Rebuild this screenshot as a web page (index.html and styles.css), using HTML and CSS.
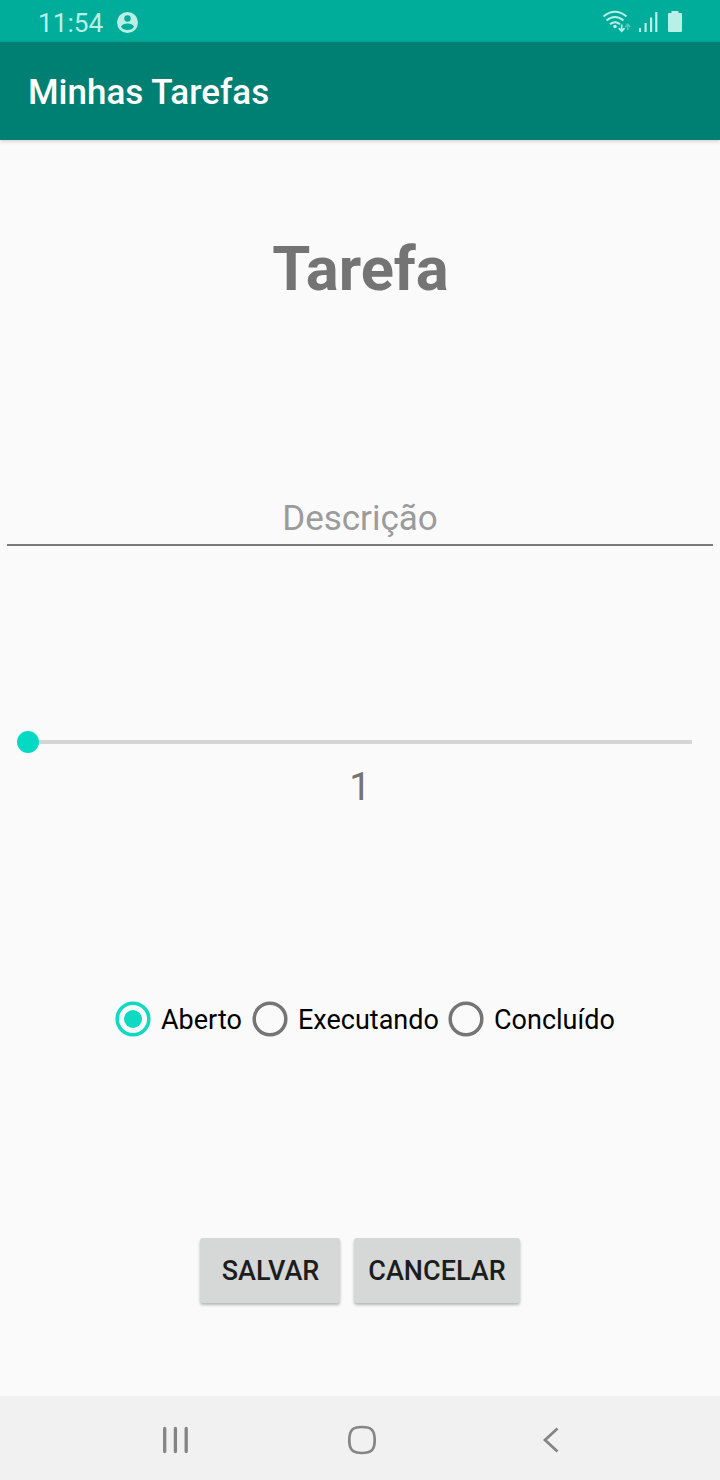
FILE: index.html
```html
<!DOCTYPE html>
<html lang="pt-BR">
<head>
<meta charset="utf-8">
<title>Minhas Tarefas</title>
<link rel="stylesheet" href="styles.css">
</head>
<body>
<div class="screen">
  <div class="status-bar">
    <span class="clock">11:54</span>
    <svg class="account" width="22" height="22" viewBox="0 0 22 22">
      <circle cx="10.500" cy="10.500" r="10.500" fill="#b8efe6"/>
      <circle cx="10.500" cy="6.500" r="3.200" fill="#00ad9b"/>
      <path d="M4 14.800C5 12.100 7.700 11.500 10.500 11.500s5.500.600 6.500 3.300C15.500 17 13.300 18 10.500 18S5.500 17 4 14.800Z" fill="#00ad9b"/>
    </svg>
    <svg class="signals" width="82" height="26" viewBox="602 9 82 26" fill="none">
      <g stroke="#b8efe6" stroke-width="2">
        <path d="M603.500 16.500Q615 7 626.500 16.500"/>
        <path d="M606.500 20.500Q615 13.500 623.500 20.500"/>
        <path d="M610 24.300Q615 20.300 620 24.300"/>
        <path d="M621.700 24.500V31M618.800 28.200L621.700 31.200L624.600 28.200" stroke-width="1.700"/>
        <path d="M627.800 30V24.500M625.300 27L627.800 24.300L630.300 27" stroke-width="1.500" opacity=".45"/>
      </g>
      <circle cx="615" cy="26.500" r="1.800" fill="#b8efe6"/>
      <g fill="#b8efe6">
        <path d="M639 28h2v4h-2zM644.500 23h2.200v9h-2.200zM650 17.500h2.200v14.500h-2.200zM655.200 12h2.200v20h-2.200z"/>
        <path d="M671.500 11h7v2h2.500q1 0 1 1v17q0 1-1 1h-12q-1 0-1-1v-17q0-1 1-1h2.500z"/>
      </g>
    </svg>
  </div>
  <header class="app-bar"><h1 class="app-title">Minhas Tarefas</h1></header>
  <main class="content">
    <h2 class="heading">Tarefa</h2>
    <div class="field"><span class="hint">Descrição</span></div>
    <div class="slider"><span class="thumb"></span><span class="track"></span></div>
    <div class="value">1</div>
    <div class="radios">
      <div class="radio radio-on"><svg class="ring" width="36" height="36" viewBox="0 0 36 36"><circle cx="18" cy="18" r="15.800"/><circle class="dot" cx="18" cy="18" r="9"/></svg><span class="label">Aberto</span></div>
      <div class="radio"><svg class="ring" width="36" height="36" viewBox="0 0 36 36"><circle cx="18" cy="18" r="15.800"/></svg><span class="label">Executando</span></div>
      <div class="radio"><svg class="ring" width="36" height="36" viewBox="0 0 36 36"><circle cx="18" cy="18" r="15.800"/></svg><span class="label">Concluído</span></div>
    </div>
    <div class="actions">
      <button class="button save">SALVAR</button>
      <button class="button cancel">CANCELAR</button>
    </div>
  </main>
  <nav class="nav-bar">
    <svg width="28" height="28" viewBox="0 0 28 28"><path d="M2.700 2.500V25.500M13.400 2.500V25.500M24.200 2.500V25.500" stroke="#858585" stroke-width="3.300" stroke-linecap="round"/></svg>
    <svg class="home" width="30" height="30" viewBox="0 0 30 30"><path d="M15 2C24.500 2 27.700 5.200 27.700 15S24.500 28 15 28S2.300 24.800 2.300 15S5.500 2 15 2Z" fill="none" stroke="#858585" stroke-width="2.700"/></svg>
    <svg class="back" width="22" height="28" viewBox="0 0 22 28"><path d="M15.500 2.500L3 14L15.500 25.500" fill="none" stroke="#858585" stroke-width="2.800"/></svg>
  </nav>
</div>
</body>
</html>
```
FILE: styles.css
```css
* { box-sizing: border-box; }
body { margin: 0; font-family: Roboto, sans-serif; background: #fafafa; }
svg { display: block; }
.screen { width: 720px; height: 1480px; display: flex; flex-direction: column; }
.status-bar { height: 42px; flex: none; display: flex; align-items: flex-start; background: #00ad9b; padding: 9px 36px 0 38px; }
.clock { font-size: 26.2px; line-height: 28px; width: 79px; color: #b8efe6; white-space: nowrap; }
.account { margin-top: 3px; }
.signals { margin-left: auto; }
.app-bar { height: 98px; flex: none; display: flex; align-items: center; padding: 4px 28px 0; background: #008073; box-shadow: 0 1px 4px rgba(0, 0, 0, .2); }
.app-title { margin: 0; color: #fff; font-size: 35px; font-weight: 500; line-height: 42px; white-space: nowrap; }
.content { flex: 1; display: flex; flex-direction: column; }
.heading { margin: 93px 0 0; padding-left: 1px; text-align: center; font-size: 61.5px; line-height: 72px; font-weight: 700; color: #747474; }
.field { margin: 189px 7px 0; height: 52px; border-bottom: 2px solid #7b7b7b; text-align: center; }
.hint { font-size: 35px; line-height: 50px; color: #9b9b9b; }
.slider { display: flex; align-items: center; margin: 185px 28px 0 17px; height: 22px; }
.thumb { width: 22px; height: 22px; border-radius: 50%; background: #05d9c3; }
.track { flex: 1; height: 4px; background: #d5d5d5; }
.value { margin-top: 11px; text-align: center; font-size: 38.5px; line-height: 46px; color: #747474; }
.radios { display: flex; margin: 191px 0 0 115px; height: 36px; }
.radio { display: flex; align-items: center; }
.radio:nth-child(1) { width: 137px; }
.radio:nth-child(2) { width: 196px; }
.ring { flex: none; fill: none; stroke: #757575; stroke-width: 3.5; }
.radio-on .ring { stroke: #10d9c3; }
.radio .dot { fill: #10d9c3; stroke: none; }
.label { margin-left: 10px; padding-top: 2px; font-size: 27px; line-height: 32px; color: #000; white-space: nowrap; }
.actions { display: flex; justify-content: center; gap: 14px; margin-top: 201px; }
.button { border: 0; padding: 0; height: 65px; border-radius: 3px; background: #d6d8d7; color: #1d1d1d; font-family: inherit; font-size: 27px; font-weight: 500; box-shadow: 0 2px 3px rgba(0, 0, 0, .28); }
.save { width: 140px; padding-left: 1px; }
.cancel { width: 166px; }
.nav-bar { height: 84px; flex: none; background: #f1f1f1; display: flex; align-items: center; padding: 3px 0 0 162px; }
.home { margin-left: 157px; }
.back { margin-left: 165px; }
```
